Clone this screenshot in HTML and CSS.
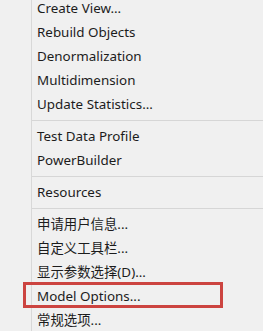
FILE: index.html
```html
<!DOCTYPE html>
<html>
<head>
<meta charset="utf-8">
<link rel="stylesheet" href="styles.css">
</head>
<body>
<div class="menu">
  <div class="item first">Create View...</div>
  <div class="item">Rebuild Objects</div>
  <div class="item">Denormalization</div>
  <div class="item">Multidimension</div>
  <div class="item">Update Statistics...</div>
  <div class="sep"></div>
  <div class="item">Test Data Profile</div>
  <div class="item">PowerBuilder</div>
  <div class="sep"></div>
  <div class="item">Resources</div>
  <div class="sep"></div>
  <div class="item">申请用户信息...</div>
  <div class="item">自定义工具栏...</div>
  <div class="item">显示参数选择(D)...</div>
  <div class="item marked">Model Options...</div>
  <div class="item">常规选项...</div>
</div>
</body>
</html>
```
FILE: styles.css
```css
html, body {
  margin: 0;
  padding: 0;
  background: #f0f0f0;
  height: 100%;
  overflow: hidden;
}
.menu {
  margin-left: 31px;
  border-left: 1px solid #d8d8d8;
  min-height: 100%;
  display: flex;
  flex-direction: column;
  font-family: "Noto Sans", "Noto Sans CJK SC", sans-serif;
  font-size: 13.4px;
  color: #1c1c1c;
}
.item {
  height: 24px;
  line-height: 24px;
  padding-left: 5px;
  position: relative;
  white-space: nowrap;
}
.item.first {
  height: 20px;
  line-height: 17px;
}
.sep {
  height: 8px;
  display: flex;
  flex-direction: column;
  justify-content: center;
}
.sep::before {
  content: "";
  display: block;
  height: 1px;
  background: #d6d6d6;
}
.marked::after {
  content: "";
  position: absolute;
  left: -9px;
  top: -2px;
  width: 200px;
  height: 26px;
  box-sizing: border-box;
  border: 3px solid #cc4440;
}
```
